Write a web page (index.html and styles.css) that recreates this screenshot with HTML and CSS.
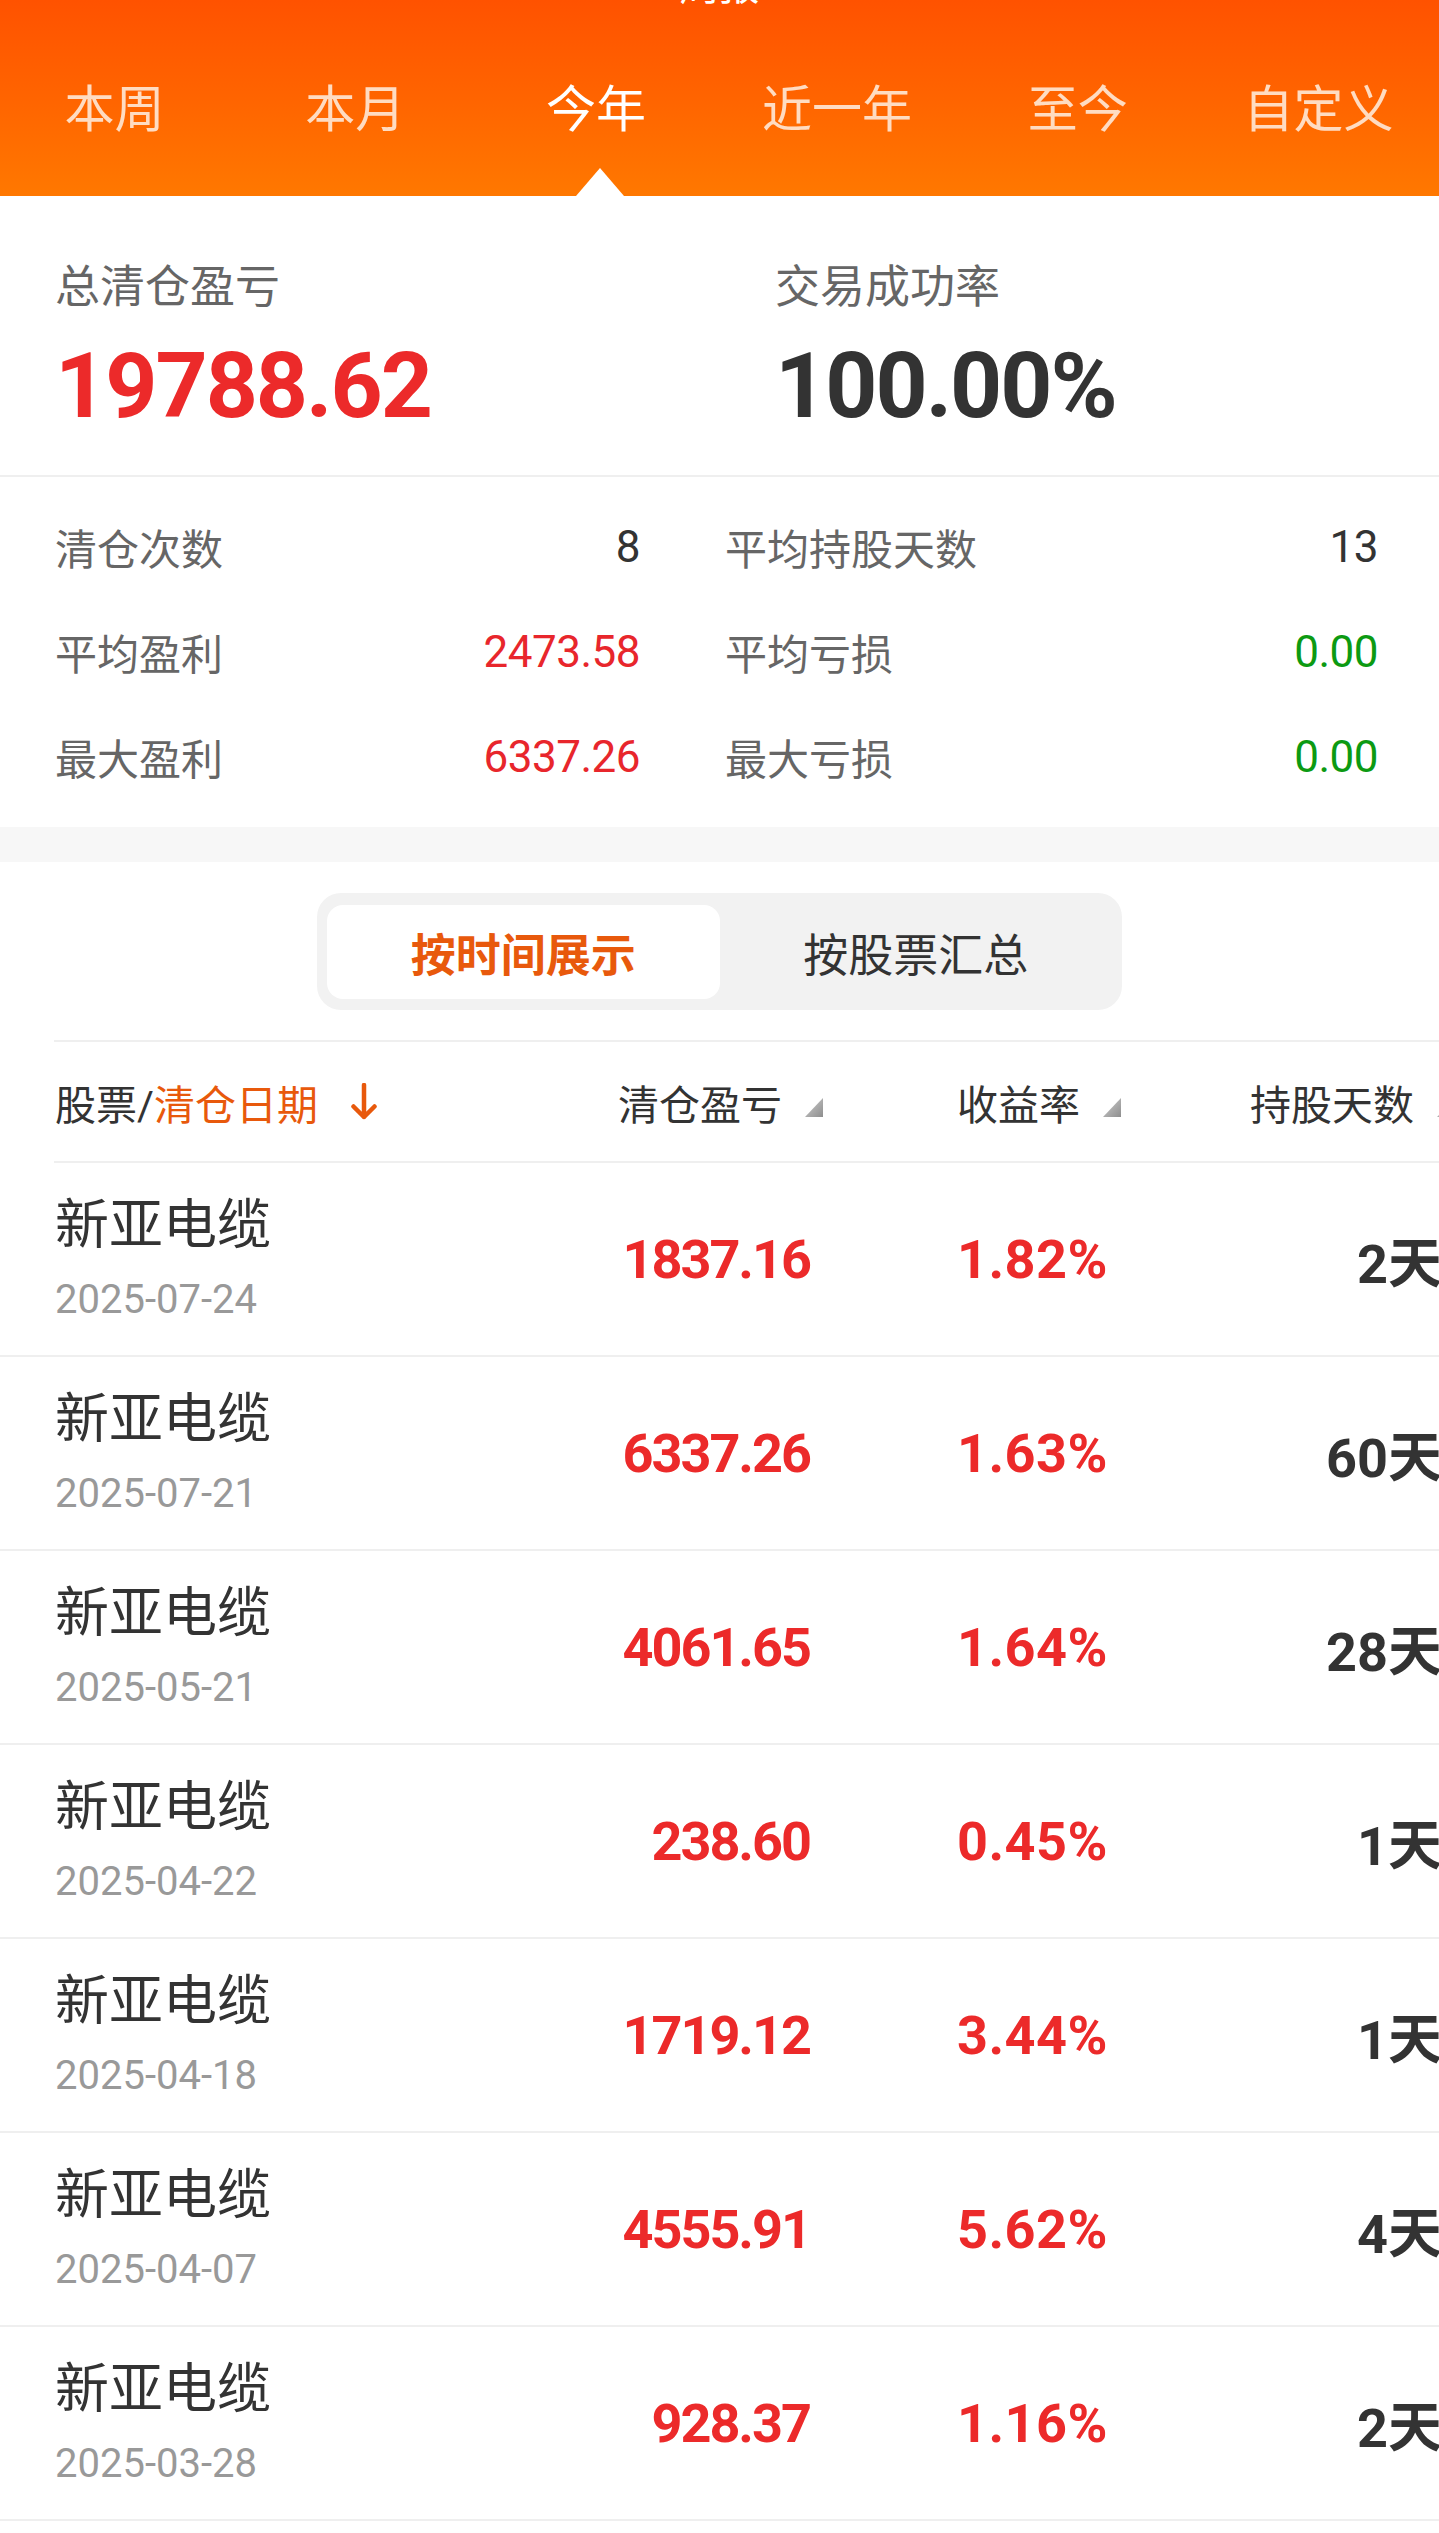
FILE: index.html
```html
<!DOCTYPE html>
<html lang="zh-CN">
<head>
<meta charset="utf-8">
<title>清仓盈亏</title>
<link rel="stylesheet" href="styles.css">
</head>
<body>
<div class="page">
  <header class="header">
    <div class="title">周报</div>
    <nav class="tabs">
      <div class="tab">本周</div>
      <div class="tab">本月</div>
      <div class="tab active">今年</div>
      <div class="tab">近一年</div>
      <div class="tab">至今</div>
      <div class="tab">自定义</div>
    </nav>
    <span class="caret"></span>
  </header>

  <section class="summary">
    <div class="sum-item">
      <div class="sum-label">总清仓盈亏</div>
      <div class="sum-value red">19788.62</div>
    </div>
    <div class="sum-item">
      <div class="sum-label">交易成功率</div>
      <div class="sum-value dark">100.00%</div>
    </div>
  </section>

  <section class="stats">
    <div class="stat"><span class="stat-label">清仓次数</span><span class="stat-value">8</span></div>
    <div class="stat"><span class="stat-label">平均持股天数</span><span class="stat-value">13</span></div>
    <div class="stat"><span class="stat-label">平均盈利</span><span class="stat-value red">2473.58</span></div>
    <div class="stat"><span class="stat-label">平均亏损</span><span class="stat-value green">0.00</span></div>
    <div class="stat"><span class="stat-label">最大盈利</span><span class="stat-value red">6337.26</span></div>
    <div class="stat"><span class="stat-label">最大亏损</span><span class="stat-value green">0.00</span></div>
  </section>

  <div class="band"></div>

  <section class="list">
    <div class="segment">
      <div class="seg-opt active">按时间展示</div>
      <div class="seg-opt">按股票汇总</div>
    </div>

    <div class="thead">
      <div class="th th-first"><span>股票/</span><span class="orange">清仓日期</span>
        <svg class="down" width="28" height="38" viewBox="0 0 28 38"><path d="M14 2 V34 M3.5 23.5 L14 34 L24.5 23.5" fill="none" stroke="#e8590c" stroke-width="4.5" stroke-linecap="round" stroke-linejoin="round"/></svg>
      </div>
      <div class="th"><span>清仓盈亏</span><svg class="sort" width="18" height="19" viewBox="0 0 18 19"><defs><linearGradient id="g1" x1="0" y1="0" x2="1" y2="1"><stop offset="0" stop-color="#cfcfcf"/><stop offset="1" stop-color="#8e8e8e"/></linearGradient></defs><polygon points="18,0 18,19 0,19" fill="url(#g1)"/></svg></div>
      <div class="th"><span>收益率</span><svg class="sort" width="18" height="19" viewBox="0 0 18 19"><polygon points="18,0 18,19 0,19" fill="url(#g1)"/></svg></div>
      <div class="th"><span>持股天数</span><svg class="sort" width="18" height="19" viewBox="0 0 18 19"><polygon points="18,0 18,19 0,19" fill="url(#g1)"/></svg></div>
    </div>

    <div class="row">
      <div class="stock"><div class="name">新亚电缆</div><div class="date">2025-07-24</div></div>
      <div class="num red">1837.16</div><div class="num pct red">1.82%</div><div class="num days dark">2天</div>
    </div>
    <div class="row">
      <div class="stock"><div class="name">新亚电缆</div><div class="date">2025-07-21</div></div>
      <div class="num red">6337.26</div><div class="num pct red">1.63%</div><div class="num days dark">60天</div>
    </div>
    <div class="row">
      <div class="stock"><div class="name">新亚电缆</div><div class="date">2025-05-21</div></div>
      <div class="num red">4061.65</div><div class="num pct red">1.64%</div><div class="num days dark">28天</div>
    </div>
    <div class="row">
      <div class="stock"><div class="name">新亚电缆</div><div class="date">2025-04-22</div></div>
      <div class="num red">238.60</div><div class="num pct red">0.45%</div><div class="num days dark">1天</div>
    </div>
    <div class="row">
      <div class="stock"><div class="name">新亚电缆</div><div class="date">2025-04-18</div></div>
      <div class="num red">1719.12</div><div class="num pct red">3.44%</div><div class="num days dark">1天</div>
    </div>
    <div class="row">
      <div class="stock"><div class="name">新亚电缆</div><div class="date">2025-04-07</div></div>
      <div class="num red">4555.91</div><div class="num pct red">5.62%</div><div class="num days dark">4天</div>
    </div>
    <div class="row">
      <div class="stock"><div class="name">新亚电缆</div><div class="date">2025-03-28</div></div>
      <div class="num red">928.37</div><div class="num pct red">1.16%</div><div class="num days dark">2天</div>
    </div>
  </section>
</div>
</body>
</html>
```

FILE: styles.css
```css
html, body {
  margin: 0;
  padding: 0;
  background: #fff;
}
body {
  font-family: Roboto, "Noto Sans CJK SC", sans-serif;
  color: #333;
}
.page {
  width: 1439px;
  overflow: hidden;
}

/* header */
.header {
  position: relative;
  height: 196px;
  background: linear-gradient(180deg, #ff5200 0%, #ff6400 50%, #ff7800 100%);
  display: flex;
  flex-direction: column;
}
.title {
  margin-top: -33px;
  height: 40px;
  line-height: 40px;
  font-size: 40px;
  color: #fff;
  text-align: center;
}
.tabs {
  display: flex;
  margin-top: 73px;
  margin-left: -6px;
  width: 1445px;
}
.tab {
  flex: 1;
  text-align: center;
  font-size: 50px;
  line-height: 60px;
  color: #ffdcc2;
}
.tab.active {
  color: #fff;
}
.caret {
  position: absolute;
  left: 576px;
  bottom: 0;
  width: 0;
  height: 0;
  border-left: 24px solid transparent;
  border-right: 24px solid transparent;
  border-bottom: 28px solid #fff;
}

/* summary */
.summary {
  display: grid;
  grid-template-columns: 720px 1fr;
  padding: 64px 0 39px 55px;
  border-bottom: 2px solid #efefef;
}
.sum-label {
  font-size: 45px;
  line-height: 56px;
  color: #666;
}
.sum-value {
  margin-top: 20px;
  font-size: 91px;
  line-height: 100px;
  font-weight: 700;
  letter-spacing: -2px;
}
.red { color: #ec2a2a; }
.dark { color: #333; }
.green { color: #0c9a12; }
.orange { color: #e8590c; }

/* stats */
.stats {
  display: grid;
  grid-template-columns: 585px 653px;
  column-gap: 85px;
  padding: 17px 0 18px 55px;
}
.stat {
  height: 105px;
  display: flex;
  align-items: center;
  justify-content: space-between;
}
.stat-label {
  font-size: 42px;
  color: #666;
}
.stat-value {
  font-size: 44px;
  letter-spacing: -0.5px;
  color: #333;
}
.stat-value.red { color: #e8262c; }
.stat-value.green { color: #0c9a12; }

.band {
  height: 35px;
  background: #f7f7f7;
}

/* segmented */
.list {
  padding-top: 31px;
}
.segment {
  box-sizing: border-box;
  width: 805px;
  height: 117px;
  margin: 0 auto;
  padding: 12px 10px 11px;
  background: #f2f2f2;
  border-radius: 24px;
  display: flex;
}
.seg-opt {
  flex: 1;
  display: flex;
  align-items: center;
  justify-content: center;
  font-size: 45px;
  color: #333;
}
.seg-opt.active {
  background: #fff;
  border-radius: 16px;
  color: #e8590c;
  font-weight: 700;
}

/* table header */
.thead {
  margin: 30px 0 0 54px;
  height: 119px;
  border-top: 2px solid #efefef;
  border-bottom: 2px solid #efefef;
  display: grid;
  grid-template-columns: 446px 323px 298px 334px;
  width: 1401px;
}
.th {
  display: flex;
  align-items: center;
  justify-content: flex-end;
  font-size: 41px;
  color: #333;
}
.th-first {
  justify-content: flex-start;
  padding-left: 1px;
}
.down {
  margin-left: 32px;
}
.sort {
  margin-left: 23px;
  margin-top: 11px;
}

/* rows */
.row {
  box-sizing: border-box;
  width: 1455px;
  height: 194px;
  border-bottom: 2px solid #efefef;
  display: grid;
  grid-template-columns: 500px 323px 298px 334px;
  align-items: center;
}
.stock {
  padding-left: 55px;
}
.name {
  font-size: 54px;
  line-height: 64px;
  color: #333;
}
.date {
  margin-top: 18px;
  font-size: 40px;
  line-height: 48px;
  color: #999;
}
.num {
  text-align: right;
  padding-right: 13px;
  font-size: 54px;
  font-weight: 700;
  letter-spacing: -2px;
}
.num.pct {
  letter-spacing: 0.5px;
}
.num.days {
  letter-spacing: 0;
}
```
